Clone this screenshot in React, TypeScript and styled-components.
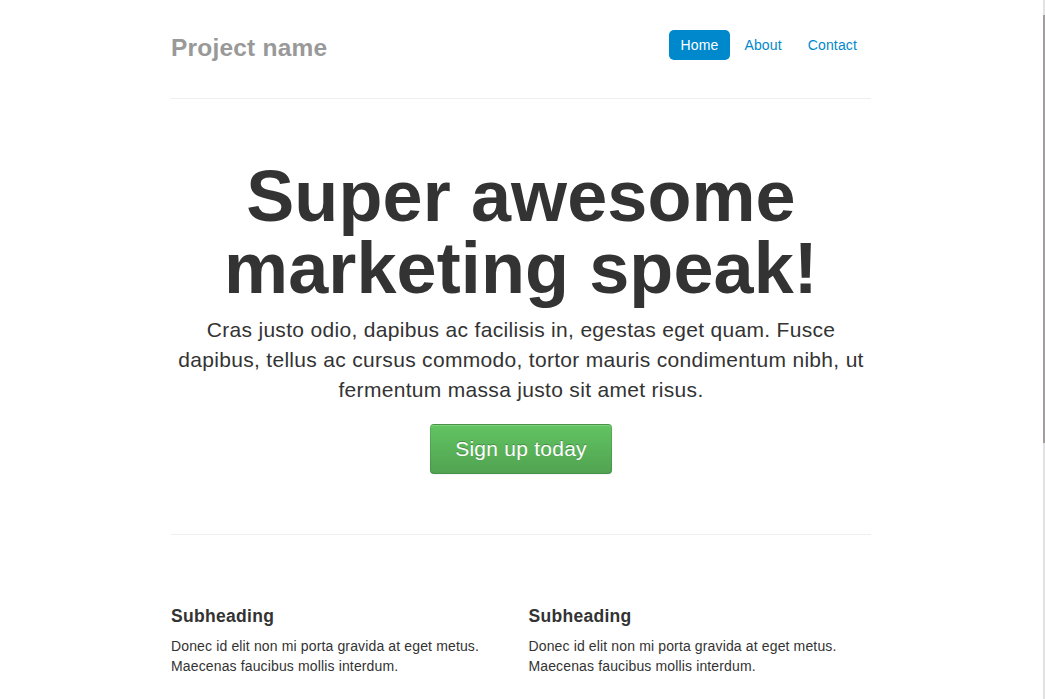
import React from "react";
import styled, { createGlobalStyle } from "styled-components";

const GlobalStyle = createGlobalStyle`
  body {
    margin: 0;
    padding: 20px 3px 40px 0;
    background: #fff;
    color: #333;
    font-family: "Liberation Sans", Arial, Helvetica, sans-serif;
    font-size: 14px;
    line-height: 20px;
    letter-spacing: 0.14px;
  }
  * { box-sizing: border-box; }
`;

const ScrollTrack = styled.div`
  position: fixed;
  top: 0;
  right: 0;
  width: 2px;
  height: 100vh;
  background: #e2e2e2;
`;

const ScrollThumb = styled.div`
  margin-top: 15px;
  height: 428px;
  width: 2px;
  background: #a39e9e;
`;

const Container = styled.div`
  margin: 0 auto;
  max-width: 700px;
`;

const Masthead = styled.header`
  display: flex;
  justify-content: space-between;
  align-items: flex-start;
  height: 48px;
`;

const Brand = styled.h3`
  margin: 8px 0 0;
  font-size: 24.5px;
  line-height: 40px;
  font-weight: bold;
  letter-spacing: 0.2px;
  color: #999;
`;

const Pills = styled.ul`
  display: flex;
  list-style: none;
  margin: 10px 0 0;
  padding: 0;
`;

const Pill = styled.a<{ $active?: boolean }>`
  display: block;
  padding: 8px 12px;
  margin-right: 2px;
  border-radius: 5px;
  line-height: 14px;
  font-size: 14px;
  text-decoration: none;
  color: ${(p) => (p.$active ? "#fff" : "#0088cc")};
  background: ${(p) => (p.$active ? "#0088cc" : "transparent")};
`;

const Rule = styled.hr`
  margin: 30px 0;
  border: 0;
  border-top: 1px solid #eeeeee;
  border-bottom: 1px solid #ffffff;
`;

const Jumbotron = styled.section`
  margin: 60px 0;
  text-align: center;
`;

const Title = styled.h1`
  margin: 0 0 10px;
  font-size: 72px;
  line-height: 72px;
  font-weight: bold;
  letter-spacing: 0.1px;
  color: #333;
`;

const Lead = styled.p`
  margin: 0 0 20px;
  padding-top: 1px;
  font-size: 21px;
  line-height: 30px;
  font-weight: 200;
  letter-spacing: 0.31px;
`;

const BigButton = styled.a`
  display: inline-block;
  margin-top: -1px;
  padding: 14px 24px;
  font-size: 21px;
  line-height: 20px;
  letter-spacing: 0.25px;
  color: #fff;
  text-decoration: none;
  text-shadow: 0 -1px 0 rgba(0, 0, 0, 0.25);
  background-color: #5bb75b;
  background-image: linear-gradient(to bottom, #62c462, #51a351);
  border: 1px solid;
  border-color: rgba(0, 0, 0, 0.1) rgba(0, 0, 0, 0.1) rgba(0, 0, 0, 0.25);
  border-radius: 4px;
  box-shadow: inset 0 1px 0 rgba(255, 255, 255, 0.2), 0 1px 2px rgba(0, 0, 0, 0.05);
  vertical-align: middle;
`;

const Marketing = styled.section`
  margin: 60px 0;
  padding-top: 10px;
  display: flex;
  justify-content: space-between;
`;

const Column = styled.div`
  width: 48.936%;
`;

const SubHeading = styled.h4<{ $first?: boolean }>`
  margin: ${(p) => (p.$first ? "0" : "28px")} 0 10px;
  font-size: 17.5px;
  line-height: 20px;
  font-weight: bold;
  letter-spacing: 0.3px;
  color: #333;
`;

const Text = styled.p`
  margin: 0;
`;

const Footer = styled.footer`
  color: #333;
  p { margin: 0 0 10px; }
`;

const body = "Donec id elit non mi porta gravida at eget metus. Maecenas faucibus mollis interdum.";

export default function App() {
  return (
    <>
      <GlobalStyle />
      <ScrollTrack>
        <ScrollThumb />
      </ScrollTrack>
      <Container>
        <Masthead>
          <Brand>Project name</Brand>
          <Pills>
            <li><Pill $active href="#">Home</Pill></li>
            <li><Pill href="#">About</Pill></li>
            <li><Pill href="#">Contact</Pill></li>
          </Pills>
        </Masthead>
        <Rule />
        <Jumbotron>
          <Title>Super awesome marketing speak!</Title>
          <Lead>
            Cras justo odio, dapibus ac facilisis in, egestas eget quam. Fusce dapibus, tellus ac cursus
            commodo, tortor mauris condimentum nibh, ut fermentum massa justo sit amet risus.
          </Lead>
          <BigButton href="#">Sign up today</BigButton>
        </Jumbotron>
        <Rule />
        <Marketing>
          {[0, 1].map((c) => (
            <Column key={c}>
              {[0, 1, 2].map((i) => (
                <React.Fragment key={i}>
                  <SubHeading $first={i === 0}>Subheading</SubHeading>
                  <Text>{body}</Text>
                </React.Fragment>
              ))}
            </Column>
          ))}
        </Marketing>
        <Rule />
        <Footer>
          <p>© Company 2013</p>
        </Footer>
      </Container>
    </>
  );
}
